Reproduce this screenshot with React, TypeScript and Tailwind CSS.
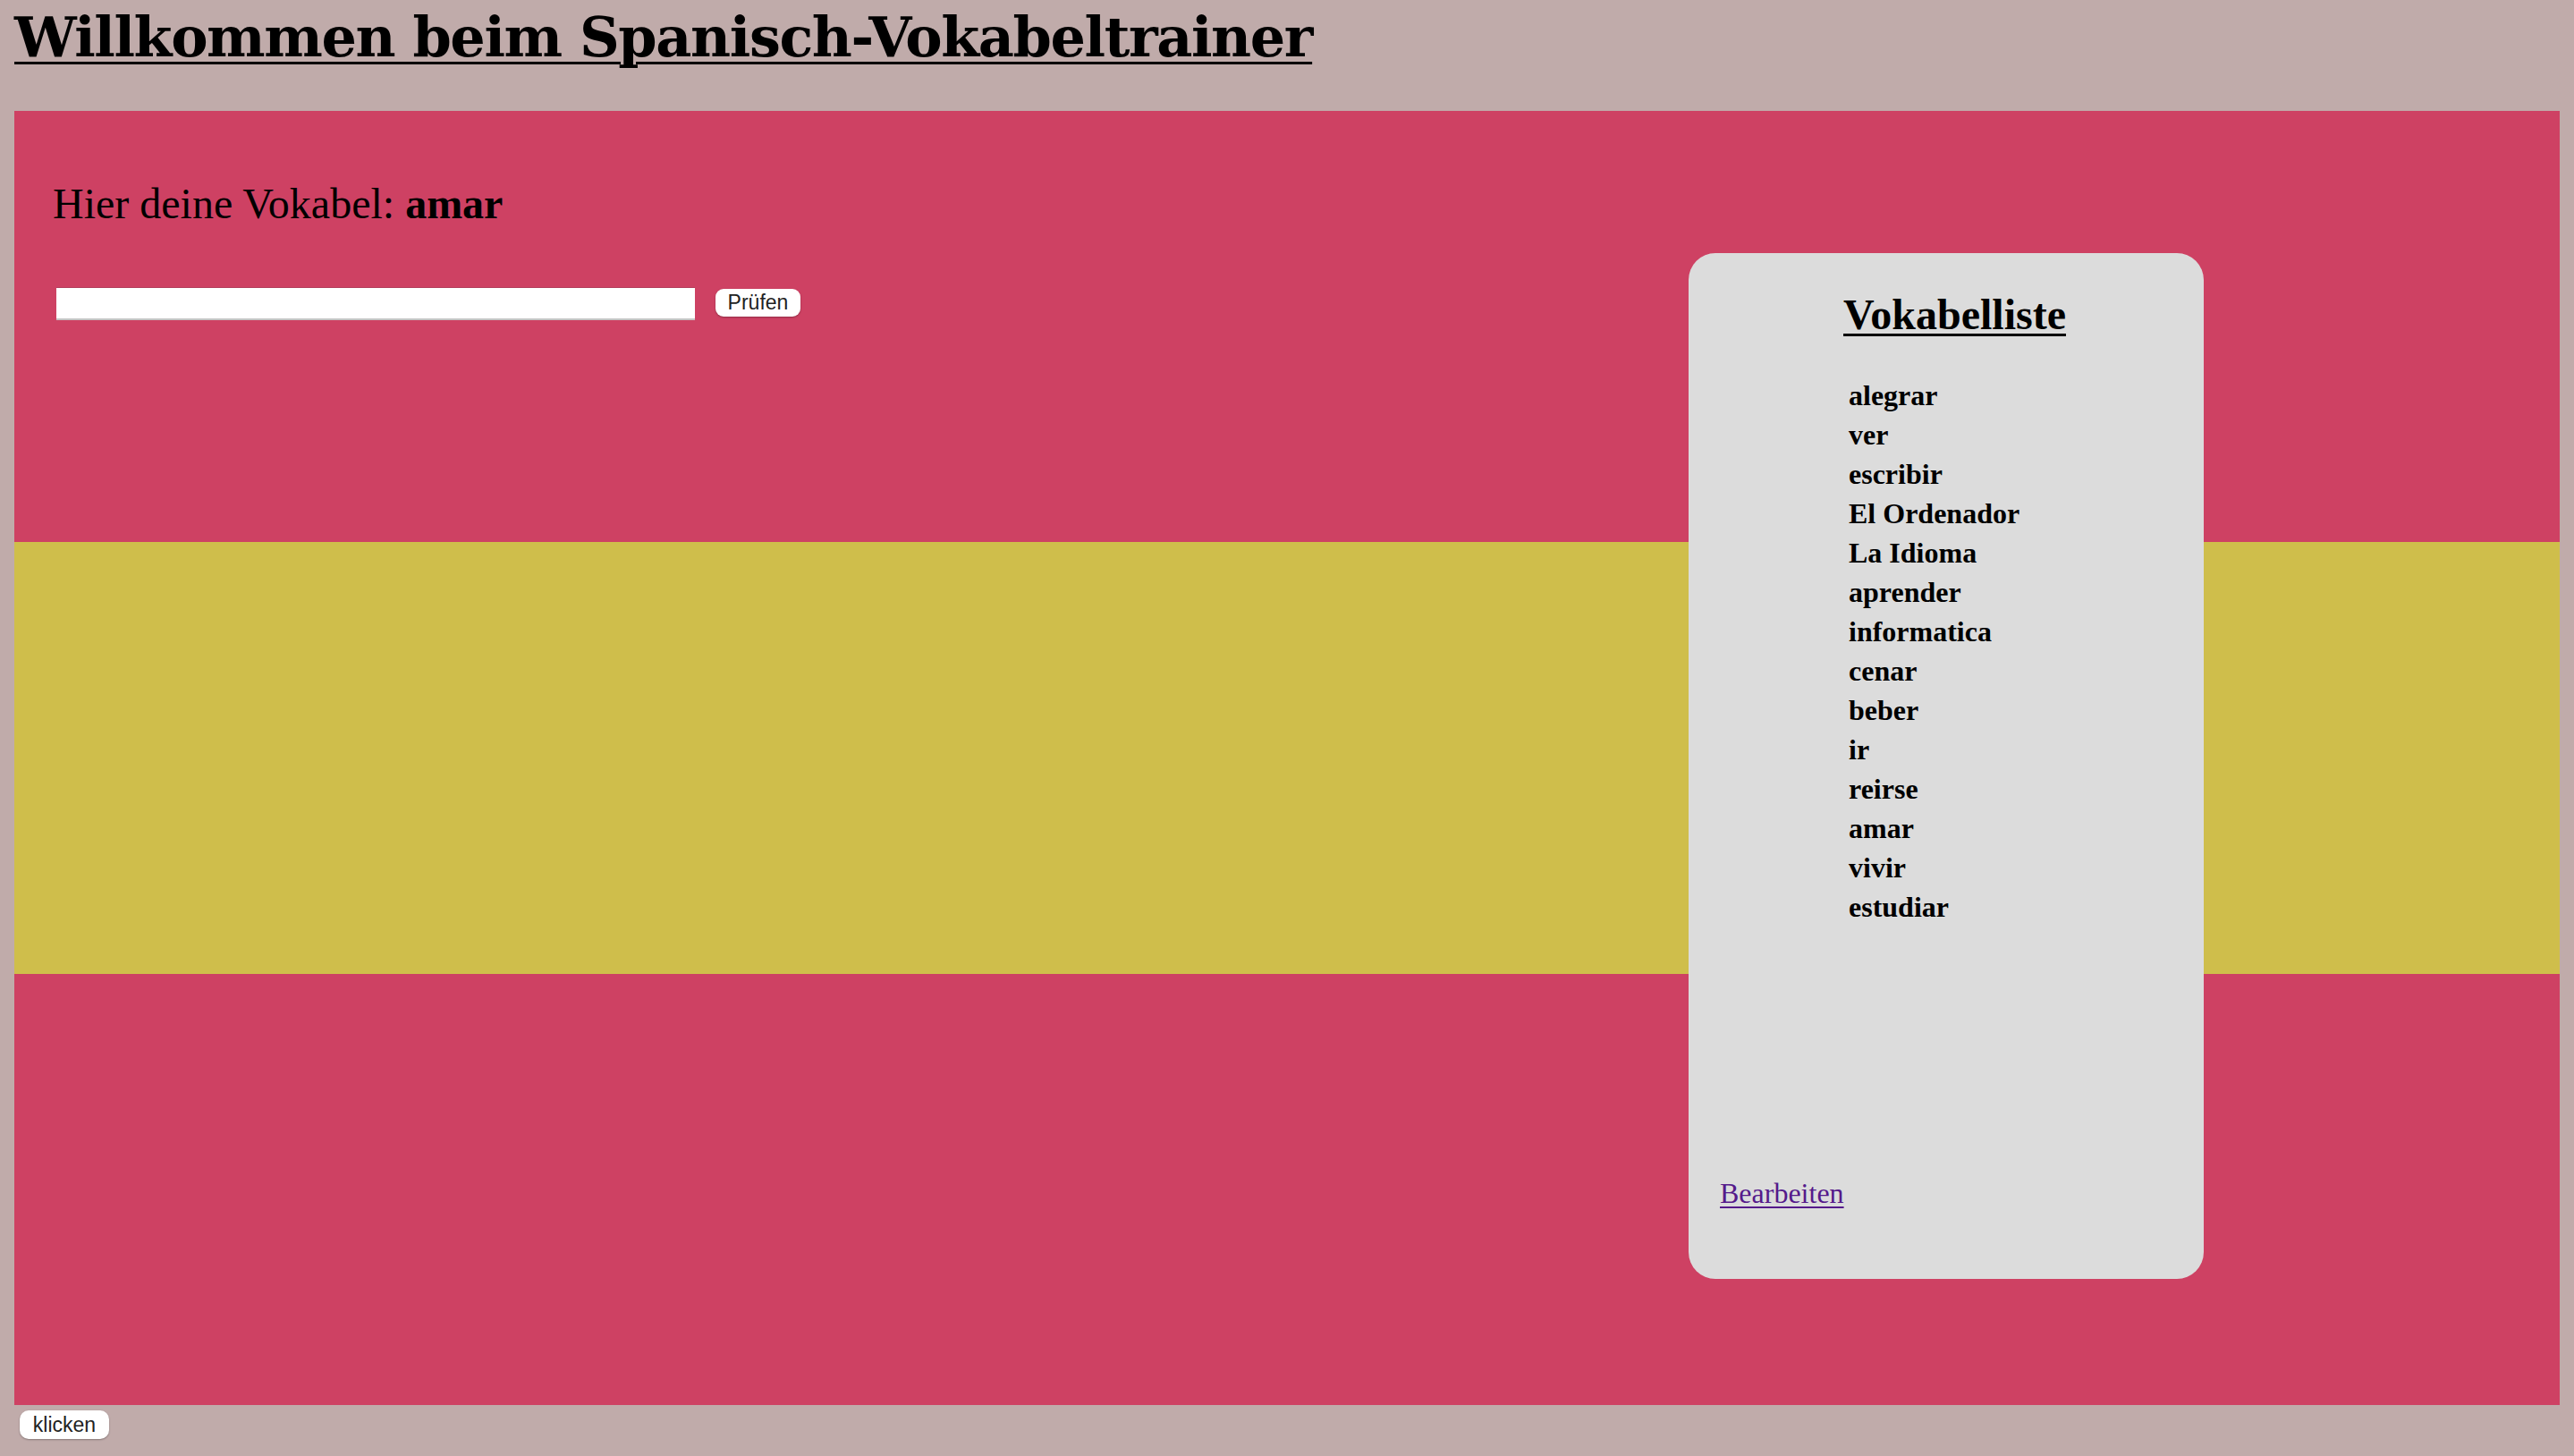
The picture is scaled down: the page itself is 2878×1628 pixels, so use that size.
import React from "react";

const words = [
  "alegrar",
  "ver",
  "escribir",
  "El Ordenador",
  "La Idioma",
  "aprender",
  "informatica",
  "cenar",
  "beber",
  "ir",
  "reirse",
  "amar",
  "vivir",
  "estudiar",
];

export default function App() {
  return (
    <div className="min-h-screen bg-[#c0abaa] px-4 pt-[5px] font-['Liberation_Serif',serif] text-black">
      <h1 className="m-0 inline-block font-['DejaVu_Serif',serif] text-[62px] font-bold leading-[74px] tracking-[-1.4px] underline decoration-[3px] underline-offset-[6px]">
        Willkommen beim Spanisch-Vokabeltrainer
      </h1>
      <div className="mt-[45px] flex h-[1447px] bg-[linear-gradient(#ce4163_0px,#ce4163_482px,#cfbe4b_482px,#cfbe4b_965px,#ce4163_965px)]">
        <div className="w-[1872px] pl-[43px] pt-[76px]">
          <h2 className="m-0 text-[48px] font-normal leading-[55px]">
            Hier deine Vokabel: <b className="font-bold">amar</b>
          </h2>
          <div className="ml-[4px] mt-[66px] flex items-start gap-[23px]">
            <input
              type="text"
              className="h-[37px] w-[714px] border-t border-b-2 border-t-[#b23e5c] border-b-[#c4c4c4] bg-white px-2 text-[26px] outline-none"
            />
            <button className="mt-[2px] h-[31px] w-[95px] rounded-[9px] bg-white font-['Liberation_Sans',sans-serif] text-[23px] leading-[31px] text-[#222] shadow-[0_1px_2px_rgba(0,0,0,0.3)]">
              Prüfen
            </button>
          </div>
        </div>
        <div className="mt-[159px] flex h-[1147px] w-[576px] flex-col rounded-[30px] bg-[#dcdcdc]">
          <h2 className="m-0 mt-[41px] pl-[19px] text-center text-[48px] font-bold leading-[55px] underline decoration-[3px] underline-offset-[5px]">
            Vokabelliste
          </h2>
          <ul className="m-0 mt-[41px] list-none pl-[179px]">
            {words.map((w) => (
              <li key={w} className="text-[32px] font-bold leading-[44px]">
                {w}
              </li>
            ))}
          </ul>
          <a
            href="#"
            className="ml-[35px] mt-[280px] self-start text-[32px] leading-[37px] text-[#551a8b] underline decoration-2 underline-offset-[4px]"
          >
            Bearbeiten
          </a>
        </div>
      </div>
      <button className="ml-[6px] mt-[6px] h-[32px] w-[100px] rounded-[10px] bg-white font-['Liberation_Sans',sans-serif] text-[23px] leading-[32px] text-[#222] shadow-[0_1px_2px_rgba(0,0,0,0.3)]">
        klicken
      </button>
    </div>
  );
}
